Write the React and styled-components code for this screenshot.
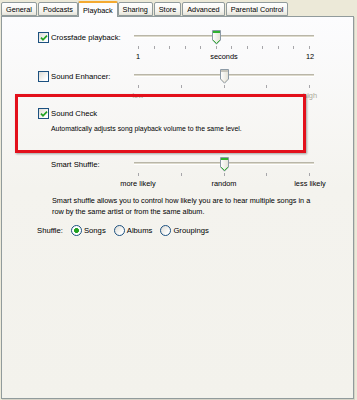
import styled, { createGlobalStyle } from 'styled-components';

const GlobalStyle = createGlobalStyle`
  html, body {
    margin: 0;
    padding: 0;
    background: #ece9d8;
  }
  body {
    font-family: 'Liberation Sans', Arial, sans-serif;
    color: #000;
  }
`;

const TABS = ['General', 'Podcasts', 'Playback', 'Sharing', 'Store', 'Advanced', 'Parental Control'];

const Thumb = ({ disabled }) => {
  const edge = disabled ? '#c6c4ba' : '#2fb22f';
  const id = disabled ? 'tg-off' : 'tg-on';
  return (
    <S.ThumbSvg width="9" height="15" viewBox="0 0 9 15">
      <defs>
        <linearGradient id={id} x1="0" y1="0" x2="1" y2="0">
          <stop offset="0" stopColor="#ffffff" />
          <stop offset="1" stopColor="#e3e1d6" />
        </linearGradient>
      </defs>
      <path
        d="M0.5 0.5 H8.5 V10 L4.5 14.2 L0.5 10 Z"
        fill={`url(#${id})`}
        stroke="#8c9aa6"
        strokeWidth="1"
      />
      <rect x="1" y="1" width="7" height="2" fill={edge} />
      <path d="M1.2 10.2 L4.5 13.4 L7.8 10.2" fill="none" stroke={edge} strokeWidth="1" />
    </S.ThumbSvg>
  );
};

const Check = ({ checked }) => (
  <S.Box>
    {checked && (
      <svg width="8" height="8" viewBox="0 0 8 8">
        <path d="M1 3.6 L3 5.8 L7 1.6" fill="none" stroke="#21a121" strokeWidth="1.7" />
      </svg>
    )}
  </S.Box>
);

const Slider = ({ ticks, value, marks, disabled }) => {
  const frac = (value - 1) / (ticks - 1);
  return (
    <S.Slider>
      <S.TrackArea>
        <S.Track />
        <S.ThumbSlot style={{ left: `calc(4px + (100% - 8px) * ${frac})` }}>
          <Thumb disabled={disabled} />
        </S.ThumbSlot>
      </S.TrackArea>
      <S.Ticks>
        {Array.from({ length: ticks }).map((_, i) => (
          <S.Tick key={i} />
        ))}
      </S.Ticks>
      <S.Marks disabled={disabled}>
        {marks.map((m, i) => (
          <S.Mark key={i}>{m}</S.Mark>
        ))}
      </S.Marks>
    </S.Slider>
  );
};

const App = () => (
  <>
    <GlobalStyle />
    <S.Window>
      <S.TabStrip>
        {TABS.map((t) => (
          <S.Tab key={t} active={t === 'Playback'}>
            {t}
          </S.Tab>
        ))}
      </S.TabStrip>
      <S.Panel>
        <S.SliderRow>
          <Check checked />
          <S.Label>Crossfade playback:</S.Label>
          <Slider ticks={12} value={6} marks={['1', 'seconds', '12']} />
        </S.SliderRow>

        <S.SliderRow gap={7}>
          <Check />
          <S.Label>Sound Enhancer:</S.Label>
          <Slider ticks={5} value={3} marks={['low', '', 'high']} disabled />
        </S.SliderRow>

        <S.CheckBlock>
          <S.CheckLine>
            <Check checked />
            <S.Label>Sound Check</S.Label>
          </S.CheckLine>
          <S.Note>Automatically adjusts song playback volume to the same level.</S.Note>
        </S.CheckBlock>

        <S.SliderRow gap={23}>
          <span />
          <S.Label>Smart Shuffle:</S.Label>
          <Slider ticks={5} value={3} marks={['more likely', 'random', 'less likely']} />
        </S.SliderRow>

        <S.Help>
          Smart shuffle allows you to control how likely you are to hear multiple songs in a
          <br />
          row by the same artist or from the same album.
        </S.Help>

        <S.ShuffleRow>
          <S.Label>Shuffle:</S.Label>
          <S.Option>
            <S.Radio checked />
            Songs
          </S.Option>
          <S.Option>
            <S.Radio />
            Albums
          </S.Option>
          <S.Option>
            <S.Radio />
            Groupings
          </S.Option>
        </S.ShuffleRow>
      </S.Panel>
      <S.Callout />
    </S.Window>
  </>
);

const S = {
  Window: styled.div`
    position: relative;
    width: 357px;
    height: 400px;
    background: #ece9d8;
    display: flex;
    flex-direction: column;
    overflow: hidden;
  `,
  TabStrip: styled.div`
    display: flex;
    align-items: flex-end;
    height: 16px;
    padding-left: 1px;
    gap: 1px;
    position: relative;
    z-index: 1;
  `,
  Tab: styled.div`
    height: ${({ active }) => (active ? '16px' : '14px')};
    margin: ${({ active }) => (active ? '0 -1px -1px' : '0')};
    padding: 0 4px;
    box-sizing: border-box;
    display: flex;
    align-items: center;
    font-size: 7.3px;
    white-space: nowrap;
    border: 1px solid #919b9c;
    border-bottom: ${({ active }) => (active ? 'none' : '1px solid #919b9c')};
    border-radius: 2px 2px 0 0;
    background: ${({ active }) =>
      active ? '#fcfcfe' : 'linear-gradient(#ffffff, #f4f3ee 70%, #e6e4d9)'};
    border-top: ${({ active }) => (active ? '2px solid #f4a930' : '1px solid #919b9c')};
  `,
  Panel: styled.div`
    width: 353px;
    height: 383px;
    box-sizing: border-box;
    margin-left: 1px;
    border: 1px solid #919b9c;
    box-shadow: 1px 1px 0 #d6d3c6;
    background: linear-gradient(#fcfcfe, #f4f3ee 45%, #f3f2ec);
    padding: 13px 0 0 0;
    display: flex;
    flex-direction: column;
  `,
  SliderRow: styled.div`
    display: grid;
    grid-template-columns: 13px 83px 180px;
    align-items: start;
    padding-left: 36px;
    margin-top: ${({ gap = 0 }) => gap}px;
  `,
  Box: styled.span`
    width: 11px;
    height: 11px;
    box-sizing: border-box;
    margin-top: 2px;
    border: 1px solid #1c5180;
    background: linear-gradient(135deg, #dcdbd5, #ffffff 80%);
    display: flex;
    align-items: center;
    justify-content: center;
  `,
  Label: styled.span`
    font-size: 7.7px;
    line-height: 15px;
    white-space: nowrap;
  `,
  Slider: styled.div`
    display: flex;
    flex-direction: column;
  `,
  TrackArea: styled.div`
    position: relative;
    height: 15px;
  `,
  Track: styled.div`
    margin-top: 5px;
    height: 3px;
    border-top: 1px solid #b9b6a8;
    border-bottom: 1px solid #ffffff;
    background: #dcd9cb;
    box-sizing: border-box;
  `,
  ThumbSlot: styled.div`
    position: absolute;
    top: 0;
    width: 0;
    display: flex;
    justify-content: center;
  `,
  ThumbSvg: styled.svg`
    flex-shrink: 0;
    display: block;
  `,
  Ticks: styled.div`
    display: flex;
    justify-content: space-between;
    padding: 0 4px;
    margin-top: 1px;
  `,
  Tick: styled.span`
    width: 1px;
    height: 3px;
    background: #a7a6aa;
  `,
  Marks: styled.div`
    display: flex;
    justify-content: space-between;
    padding: 0 4px;
    margin-top: 3px;
    color: ${({ disabled }) => (disabled ? '#aca899' : '#000')};
  `,
  Mark: styled.span`
    width: 0;
    display: flex;
    justify-content: center;
    white-space: nowrap;
    font-size: 7.4px;
    line-height: 10px;
  `,
  CheckBlock: styled.div`
    margin-top: 7px;
    padding-left: 36px;
    display: flex;
    flex-direction: column;
  `,
  CheckLine: styled.div`
    display: flex;
    align-items: flex-start;
    gap: 2px;
    margin-top: -2px;
  `,
  Note: styled.div`
    padding-left: 13px;
    margin-top: 3px;
    font-size: 6.9px;
    line-height: 10px;
    white-space: nowrap;
  `,
  Help: styled.div`
    padding-left: 50px;
    margin-top: 6px;
    font-size: 7.3px;
    line-height: 11px;
    white-space: nowrap;
  `,
  ShuffleRow: styled.div`
    display: flex;
    align-items: center;
    gap: 8px;
    padding-left: 35px;
    margin-top: 6px;
  `,
  Option: styled.label`
    display: flex;
    align-items: center;
    gap: 2px;
    font-size: 7.7px;
    line-height: 11px;
  `,
  Radio: styled.span`
    width: 11px;
    height: 11px;
    box-sizing: border-box;
    border-radius: 50%;
    border: 1px solid #1c5180;
    background: ${({ checked }) =>
      checked
        ? 'radial-gradient(circle, #21a121 0 2.2px, #ffffff 2.6px)'
        : 'linear-gradient(135deg, #dcdbd5, #ffffff 80%)'};
  `,
  Callout: styled.div`
    position: absolute;
    left: 15px;
    top: 94px;
    width: 291px;
    height: 59px;
    box-sizing: border-box;
    border: 3px solid #e3101b;
    box-shadow: 1px 1px 2px rgba(0, 0, 0, 0.35);
    pointer-events: none;
  `,
};

export default App;
